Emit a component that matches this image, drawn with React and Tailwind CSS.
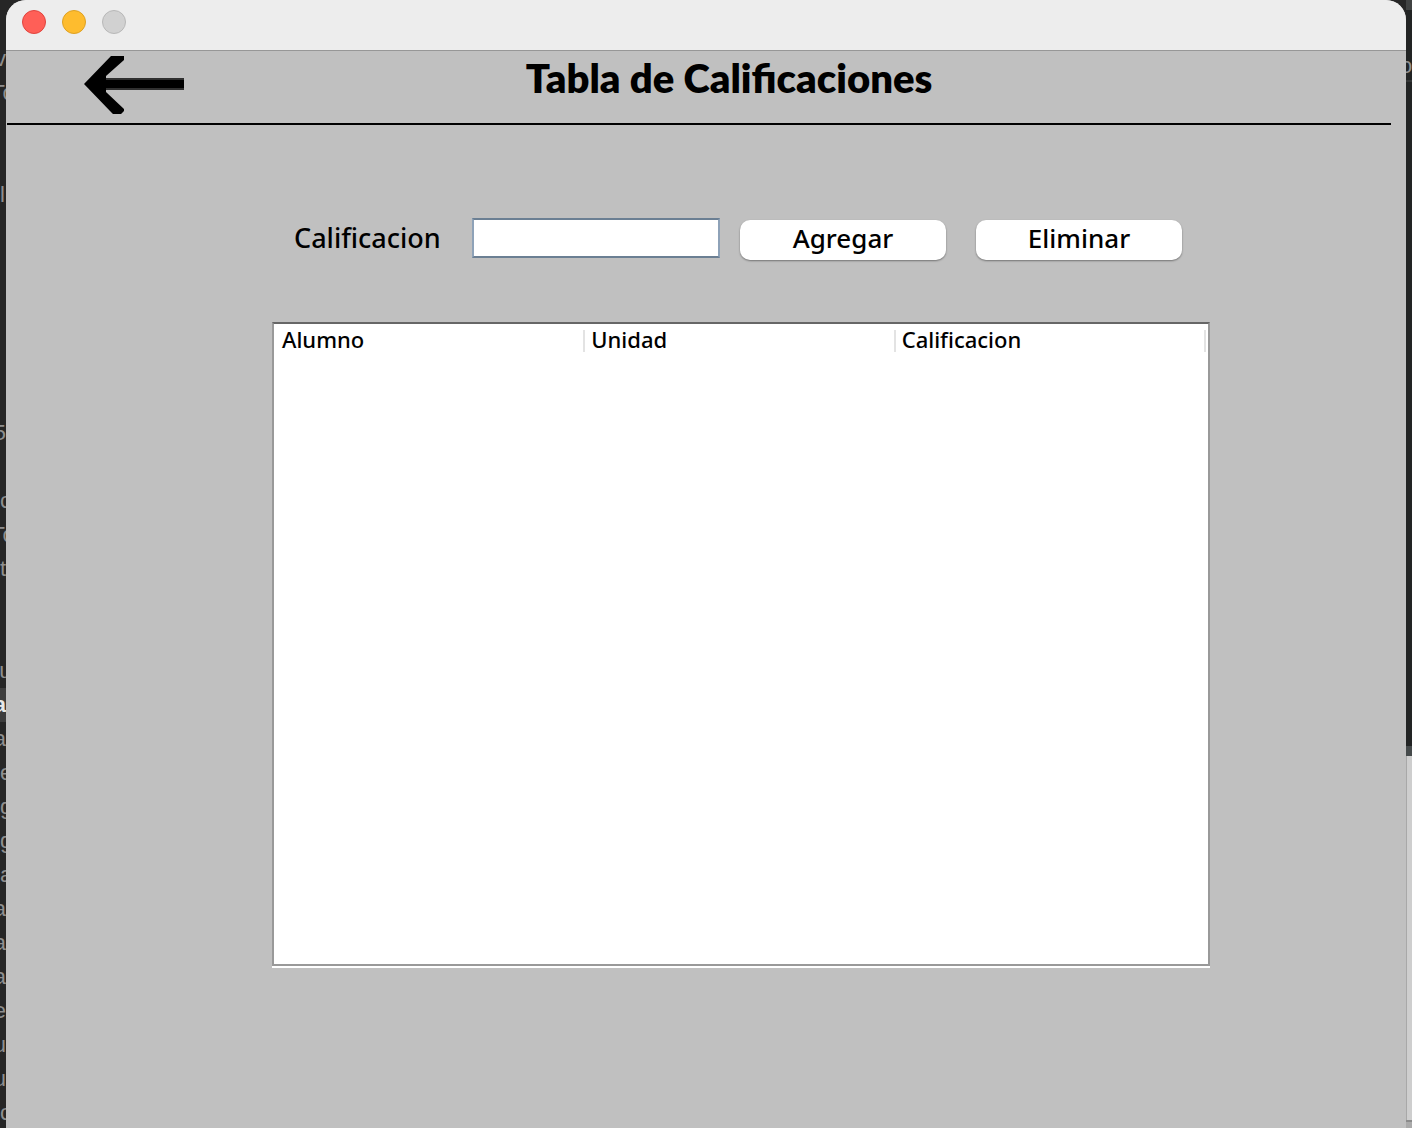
const editorLines = [
  ['', 'start'], ['v', 'end'], ['To', 'mid'], ['', 'start'], ['', 'start'], ['l', 'start'],
  ['', 'start'], ['', 'start'], ['', 'start'], ['', 'start'], ['', 'start'], ['', 'start'],
  ['5', 'end'], ['', 'start'], ['c', 'start'], ['To', 'mid'], ['t', 'start'], ['', 'start'],
  ['', 'start'], ['lu', 'mid'], ['a', 'active'], ['a', 'end'], ['e', 'start'], ['g', 'start'],
  ['g', 'start'], ['a', 'start'], ['a', 'end'], ['a', 'end'], ['a', 'end'], ['e', 'end'],
  ['u', 'end'], ['u', 'end'], ['c', 'start'],
];

const lineStyles = {
  start: 'justify-start text-[#8f8f8f]',
  mid: 'justify-center text-[#8f8f8f]',
  end: 'justify-end text-[#8f8f8f]',
  active: 'justify-end bg-[#3d3d3d] font-bold text-[#e8e8e8]',
};

function EditorEdge() {
  return (
    <aside className="w-1.5 shrink-0 overflow-hidden bg-[#262626] pt-2 font-['Liberation_Sans',sans-serif] text-[22px] leading-[34px]">
      {editorLines.map(([text, kind], i) => (
        <div key={i} className={`flex h-[34px] overflow-hidden ${lineStyles[kind]}`}>
          <span className="shrink-0">{text}</span>
        </div>
      ))}
    </aside>
  );
}

function DesktopEdge() {
  return (
    <aside className="flex w-1.5 shrink-0 flex-col overflow-hidden bg-[#222424]">
      <div className="h-2.5 bg-[#404242]" />
      <div className="flex h-[72px] items-center border-b-2 border-[#343636] pt-10 font-['Liberation_Sans',sans-serif] text-[22px] text-[#8f8f8f]">
        <span className="-ml-1.5">o</span>
      </div>
      <div className="h-[664px]" />
      <div className="h-2.5 bg-[#454a4b]" />
      <div className="flex-1 border-l border-[#a8a8a8] bg-[#cecece]" />
      <div className="h-2.5 border-t-2 border-[#8b8b8b] bg-[#aaaaaa]" />
    </aside>
  );
}

function BackArrow() {
  return (
    <svg viewBox="0 0 100 58" className="block h-[58px] w-[100px]" aria-hidden="true">
      <path d="M16 22H100V34H16z" fill="#303030" />
      <path d="M16 24H100V32H16z" />
      <path d="M0 28 27 0H40V4L22 20V36L40 53V55L37 58H29L26 55z" />
    </svg>
  );
}

function PushButton({ children }) {
  return (
    <button
      type="button"
      className="mt-0.5 h-10 w-[206px] rounded-[10px] bg-white pb-1 text-center font-medium shadow-[0_1px_2px_rgba(0,0,0,0.4)]"
    >
      {children}
    </button>
  );
}

function HeaderCell({ children }) {
  return (
    <th className="h-[22px] border-r-2 border-[#e3e3e3] p-0 pb-1 pl-1.5 font-medium leading-[18px] first:pl-2">
      {children}
    </th>
  );
}

export default function App() {
  return (
    <div className="flex min-h-screen bg-[#262626] font-['Noto_Sans',sans-serif] text-black">
      <EditorEdge />
      <main className="flex min-w-0 flex-1 flex-col rounded-t-[20px] bg-[#c0c0c0]">
        <div className="flex h-[51px] items-start gap-4 rounded-t-[20px] border-b border-[#979797] bg-[#ededed] px-4 pt-2.5">
          <button type="button" aria-label="Cerrar" className="size-6 rounded-full border border-[#e0443e] bg-[#ff5f57]" />
          <button type="button" aria-label="Minimizar" className="size-6 rounded-full border border-[#dea123] bg-[#febc2e]" />
          <button type="button" aria-label="Ampliar" className="size-6 rounded-full border border-[#b8b8b8] bg-[#d1d1d1]" />
        </div>

        <header className="ml-px mr-[15px] grid h-[74px] grid-cols-[1fr_auto_1fr] items-start border-b-2 border-black pl-[60px] pt-[5px]">
          <button type="button" aria-label="Regresar" className="ml-[17px] w-[100px]">
            <BackArrow />
          </button>
          <h1 className="font-['Lato',sans-serif] text-[40px] font-extrabold leading-[44px]">
            Tabla de Calificaciones
          </h1>
          <span />
        </header>

        <div className="flex flex-1 flex-col items-center pb-40 pl-[70px] pt-[93px] [font-variant-ligatures:none]">
          <div className="flex w-full max-w-[938px] flex-1 flex-col">
            <form className="flex items-start pl-[22px] text-[26px] leading-9">
              <label htmlFor="calificacion" className="w-[178px] pt-0.5 text-[27px] font-medium leading-9">Calificacion</label>
              <input
                id="calificacion"
                type="text"
                className="h-10 w-[248px] border-2 border-x-[#8ea2b8] border-y-[#6b7f93] bg-white px-2 outline-none"
              />
              <div className="ml-5 flex gap-[30px]">
                <PushButton>Agregar</PushButton>
                <PushButton>Eliminar</PushButton>
              </div>
            </form>

            <div className="mb-0.5 mt-[62px] flex flex-1 flex-col border-b-2 border-white">
              <div className="flex-1 border-2 border-[#999999] border-t-[#666666] bg-white pr-0.5 pt-1.5">
                <table className="w-full table-fixed text-left text-[22px]">
                  <thead>
                    <tr>
                      <HeaderCell>Alumno</HeaderCell>
                      <HeaderCell>Unidad</HeaderCell>
                      <HeaderCell>Calificacion</HeaderCell>
                    </tr>
                  </thead>
                  <tbody />
                </table>
              </div>
            </div>
          </div>
        </div>
      </main>
      <DesktopEdge />
    </div>
  );
}
